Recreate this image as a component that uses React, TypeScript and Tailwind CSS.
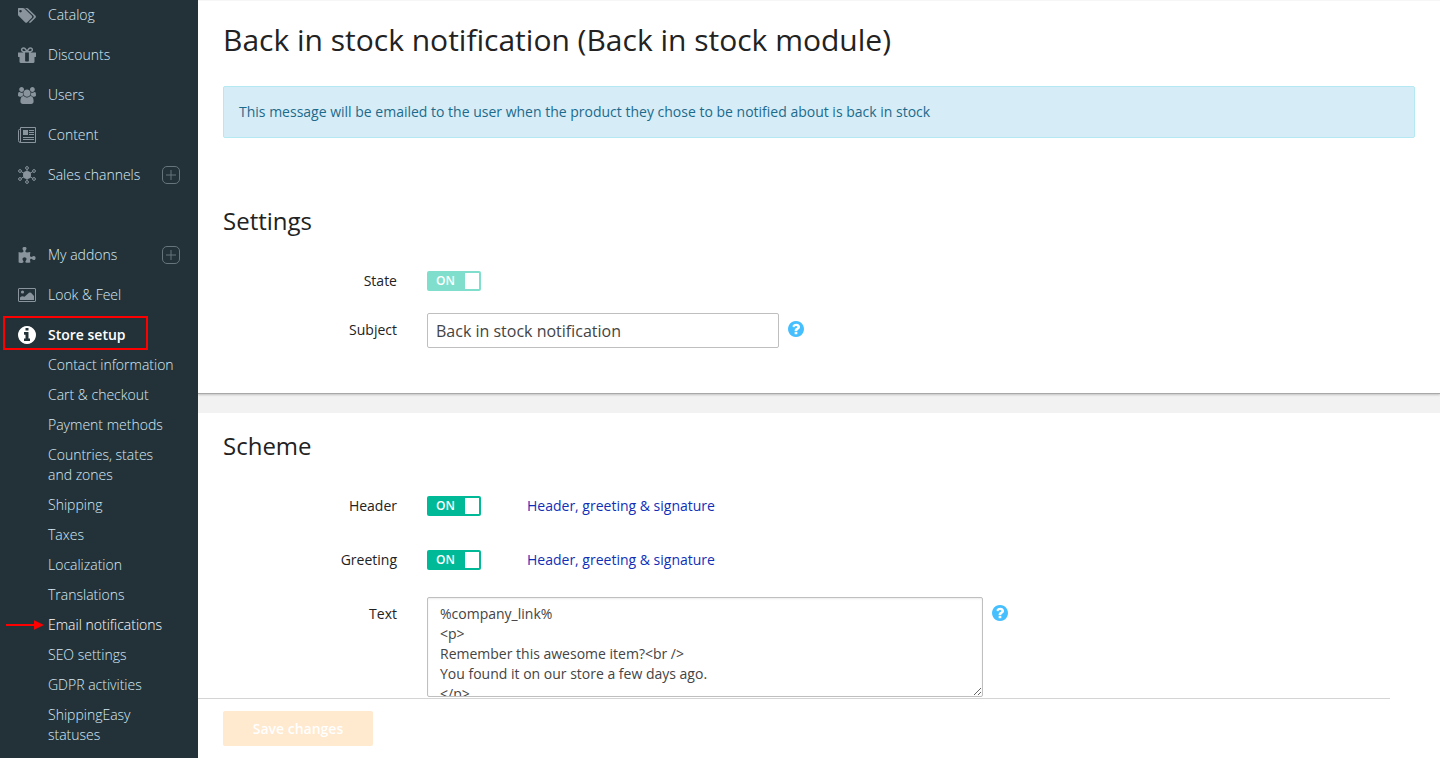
import React, { useState } from "react";

type GlyphProps = { path: string; viewBox: string; className?: string };

function Glyph({ path, viewBox, className = "" }: GlyphProps) {
  return (
    <svg viewBox={viewBox} className={className} fill="currentColor" aria-hidden="true">
      <path d={path} />
    </svg>
  );
}

const TAGS =
  "M384 448q0-53-37.5-90.5t-90.5-37.5-90.5 37.5-37.5 90.5 37.5 90.5 90.5 37.5 90.5-37.5 37.5-90.5zm1067 576q0 53-37 90l-491 492q-39 37-91 37-53 0-90-37l-715-716q-38-37-64.5-101t-26.5-117v-416q0-52 38-90t90-38h416q53 0 117 26.5t102 64.5l715 714q37 39 37 91zm384 0q0 53-37 90l-491 492q-39 37-91 37-36 0-59-14t-53-45l470-470q37-37 37-90 0-52-37-91l-715-714q-38-38-102-64.5t-117-26.5h224q53 0 117 26.5t102 64.5l715 714q37 39 37 91z";
const GIFT =
  "M1056 1356v-716h-320v716q0 25 18 38.5t46 13.5h192q28 0 46-13.5t18-38.5zm-456-844h195l-126-161q-26-31-69-31-40 0-68 28t-28 68 28 68 68 28zm688-96q0-40-28-68t-68-28q-43 0-69 31l-125 161h194q40 0 68-28t28-68zm376 256v320q0 14-9 23t-23 9h-96v416q0 40-28 68t-68 28h-1088q-40 0-68-28t-28-68v-416h-96q-14 0-23-9t-9-23v-320q0-14 9-23t23-9h440q-93 0-158.5-65.5t-65.5-158.5 65.5-158.5 158.5-65.5q107 0 168 77l128 165 128-165q61-77 168-77 93 0 158.5 65.5t65.5 158.5-65.5 158.5-158.5 65.5h440q14 0 23 9t9 23z";
const USERS =
  "M593 896q-162 5-265 128h-134q-82 0-138-40.5t-56-118.5q0-353 124-353 6 0 43.5 21t97.5 42.5 119 21.5q67 0 133-23-5 37-5 66 0 139 81 256zm1071 637q0 120-73 189.5t-194 69.5h-874q-121 0-194-69.5t-73-189.5q0-53 3.5-103.5t14-109 26.5-108.5 43-97.5 62-81 85.5-53.5 111.5-20q10 0 43 21.5t73 48 107 48 135 21.5 135-21.5 107-48 73-48 43-21.5q61 0 111.5 20t85.5 53.5 62 81 43 97.5 26.5 108.5 14 109 3.5 103.5zm-1024-1277q0 106-75 181t-181 75-181-75-75-181 75-181 181-75 181 75 75 181zm704 384q0 159-112.5 271.5t-271.5 112.5-271.5-112.5-112.5-271.5 112.5-271.5 271.5-112.5 271.5 112.5 112.5 271.5zm576 225q0 78-56 118.5t-138 40.5h-134q-103-123-265-128 81-117 81-256 0-29-5-66 66 23 133 23 59 0 119-21.5t97.5-42.5 43.5-21q124 0 124 353zm-128-609q0 106-75 181t-181 75-181-75-75-181 75-181 181-75 181 75 75 181z";
const PUZZLE =
  "M1755 1083q0 81-44.5 135t-123.5 54q-41 0-77.5-17.5t-59-38-56.5-38-71-17.5q-110 0-110 124 0 39 16 115t15 115v5q-22 0-33 1-34 3-97.5 11.5t-115.5 13.5-98 5q-61 0-103-26.5t-42-83.5q0-37 17.5-71t38-56.5 38-59 17.5-77.5q0-79-54-123.5t-135-44.5q-84 0-143 45.5t-59 127.5q0 43 15 83t33.5 64.5 33.5 53 15 50.5q0 45-46 89-37 35-117 35-95 0-245-24-9-2-27.5-4t-27.5-4l-13-2q-1 0-3-1-2 0-2-1v-1024q2 1 17.5 3.5t34 5 21.5 3.5q150 24 245 24 80 0 117-35 46-44 46-89 0-22-15-50.5t-33.5-53-33.5-64.5-15-83q0-82 59-127.5t144-45.5q80 0 134 44.5t54 123.5q0 41-17.5 77.5t-38 59-38 56.5-17.5 71q0 57 42 83.5t103 26.5q64 0 180-15t163-17v2q-1 2-3.5 17.5t-5 34-3.5 21.5q-24 150-24 245 0 80 35 117 44 46 89 46 22 0 50.5-15t53-33.5 64.5-33.5 83-15q82 0 127.5 59t45.5 143z";
const INFO =
  "M1152 1376v-160q0-14-9-23t-23-9h-96v-512q0-14-9-23t-23-9h-320q-14 0-23 9t-9 23v160q0 14 9 23t23 9h96v320h-96q-14 0-23 9t-9 23v160q0 14 9 23t23 9h448q14 0 23-9t9-23zm-128-896v-160q0-14-9-23t-23-9h-192q-14 0-23 9t-9 23v160q0 14 9 23t23 9h192q14 0 23-9t9-23zm640 416q0 209-103 385.5t-279.5 279.5-385.5 103-385.5-103-279.5-279.5-103-385.5 103-385.5 279.5-279.5 385.5-103 385.5 103 279.5 279.5 103 385.5z";
const QUESTION =
  "M1024 1376v-192q0-14-9-23t-23-9h-192q-14 0-23 9t-9 23v192q0 14 9 23t23 9h192q14 0 23-9t9-23zm256-672q0-88-55.5-163t-138.5-116-170-41q-243 0-371 213-15 24 8 42l132 100q7 6 19 6 16 0 25-12 53-68 86-92 34-24 86-24 48 0 85.5 26t37.5 59q0 38-20 61t-68 45q-63 28-115.5 86.5t-52.5 125.5v36q0 14 9 23t23 9h192q14 0 23-9t9-23q0-19 21.5-49.5t54.5-49.5q32-18 49-28.5t46-35 44.5-48 28-60.5 12.5-81zm384 192q0 209-103 385.5t-279.5 279.5-385.5 103-385.5-103-279.5-279.5-103-385.5 103-385.5 279.5-279.5 385.5-103 385.5 103 279.5 279.5 103 385.5z";

function NewsIcon() {
  return (
    <svg viewBox="0 0 18 16" className="h-4 w-[18px]" fill="none" stroke="currentColor" aria-hidden="true">
      <path d="M2.500 0.500h15v15h-15z" />
      <path d="M2.500 2.500h-1q-1 0-1 1v10q0 2 2 2" />
      <path d="M5 3h5v5H5z" fill="currentColor" stroke="none" />
      <path d="M11 3.500h5M11 5.500h5M11 7.500h5M5 10.500h11M5 12.500h11" />
    </svg>
  );
}

function ChannelsIcon() {
  const nodes = [
    [9, 2],
    [9, 16],
    [2, 5],
    [16, 5],
    [2, 13],
    [16, 13],
  ];
  return (
    <svg viewBox="0 0 18 18" className="size-[18px]" fill="none" stroke="currentColor" aria-hidden="true">
      <circle cx="9" cy="9" r="4" fill="currentColor" stroke="none" />
      <path d="M9 3.5v11M3.3 5.7l11.4 6.6M14.7 5.7L3.3 12.3" />
      {nodes.map(([x, y]) => (
        <circle key={`${x}-${y}`} cx={x} cy={y} r="1.4" />
      ))}
    </svg>
  );
}

function PictureIcon() {
  return (
    <svg viewBox="0 0 18 14" className="h-[14px] w-[18px]" aria-hidden="true">
      <rect x="0.5" y="0.5" width="17" height="13" rx="0.5" fill="none" stroke="currentColor" />
      <circle cx="4.5" cy="4" r="1.6" fill="currentColor" />
      <path d="M2 12V9.5Q4 7.5 6.5 8.8L11 4.8Q12 4 13 4.8L16 8V12Z" fill="currentColor" />
    </svg>
  );
}

type Item = { label: string; icon: React.ReactNode; addable?: boolean };

const catalogItems: Item[] = [
  { label: "Catalog", icon: <Glyph path={TAGS} viewBox="0 128 1840 1536" className="h-[15px] w-[18px]" /> },
  { label: "Discounts", icon: <Glyph path={GIFT} viewBox="128 192 1536 1344" className="h-4 w-[18px]" /> },
  { label: "Users", icon: <Glyph path={USERS} viewBox="0 0 1920 1792" className="h-[17px] w-[18px]" /> },
  { label: "Content", icon: <NewsIcon /> },
  { label: "Sales channels", icon: <ChannelsIcon />, addable: true },
];

const storeItems: Item[] = [
  { label: "My addons", icon: <Glyph path={PUZZLE} viewBox="64 0 1700 1664" className="h-[17px] w-[18px]" />, addable: true },
  { label: "Look & Feel", icon: <PictureIcon /> },
];

const setupItems = [
  "Contact information",
  "Cart & checkout",
  "Payment methods",
  "Countries, states and zones",
  "Shipping",
  "Taxes",
  "Localization",
  "Translations",
  "Email notifications",
  "SEO settings",
  "GDPR activities",
  "ShippingEasy statuses",
];

function NavItem({ label, icon, addable }: Item) {
  return (
    <li className="flex h-10 items-center pr-[18px] pl-[18px]">
      <a href="#" className="flex grow items-center gap-3">
        <span className="flex w-[18px] justify-center text-[#89949c]">{icon}</span>
        {label}
      </a>
      {addable && (
        <button type="button" aria-label={`Add to ${label}`} className="text-[#66747c]">
          <svg viewBox="0 0 18 18" className="size-[18px]" fill="none" stroke="currentColor" aria-hidden="true">
            <rect x="0.5" y="0.5" width="17" height="17" rx="4.5" />
            <path d="M9 4v10M4 9h10" />
          </svg>
        </button>
      )}
    </li>
  );
}

function Sidebar() {
  return (
    <nav className="w-[198px] shrink-0 overflow-hidden bg-[#233238] text-sm leading-5 font-light text-[#d6ebf7]">
      <ul className="-mt-[5px]">
        {catalogItems.map((item) => (
          <NavItem key={item.label} {...item} />
        ))}
      </ul>
      <ul className="mt-10">
        {storeItems.map((item) => (
          <NavItem key={item.label} {...item} />
        ))}
        <li>
          <div className="relative flex h-10 items-center pl-[18px] font-semibold text-white">
            <a href="#" className="flex items-center gap-3">
              <Glyph path={INFO} viewBox="128 128 1536 1536" className="size-[18px]" />
              Store setup
            </a>
            <span className="pointer-events-none absolute top-px left-[3px] h-[34px] w-[145px] border-2 border-[#f00]" />
          </div>
          <ul className="-mt-[5px] pr-6 pl-12">
            {setupItems.map((label) =>
              label === "Email notifications" ? (
                <li key={label} className="relative py-[5px] text-white">
                  <svg
                    viewBox="0 0 38 10"
                    className="absolute top-[10px] -left-[42px] h-[10px] w-[38px]"
                    fill="#f00"
                    aria-hidden="true"
                  >
                    <path d="M0 4h28V0.300L38 5l-10 4.700V6H0z" />
                  </svg>
                  <a href="#" aria-current="page">{label}</a>
                </li>
              ) : (
                <li key={label} className="py-[5px]">
                  <a href="#">{label}</a>
                </li>
              ),
            )}
          </ul>
        </li>
      </ul>
    </nav>
  );
}

function Toggle({ id, disabled = false }: { id: string; disabled?: boolean }) {
  const [on, setOn] = useState(true);
  return (
    <label
      htmlFor={id}
      className={
        "flex h-5 w-[54px] items-center justify-between rounded-[2px] pr-[2px] pl-[9px] text-xs leading-4 font-semibold text-white " +
        (disabled ? "bg-[#80dfcc]" : on ? "bg-[#00ba97]" : "bg-[#aaaaaa]")
      }
    >
      <input
        id={id}
        type="checkbox"
        className="sr-only"
        checked={on}
        disabled={disabled}
        onChange={(e) => setOn(e.target.checked)}
      />
      {on ? "ON" : "OFF"}
      <span className="h-4 w-[14px] bg-white" />
    </label>
  );
}

function Help({ label }: { label: string }) {
  return (
    <button type="button" aria-label={label} className="ml-[9px] text-[#46bfff]">
      <Glyph path={QUESTION} viewBox="128 128 1536 1536" className="size-4" />
    </button>
  );
}

function FieldLabel({ htmlFor, children }: { htmlFor: string; children: string }) {
  return (
    <label htmlFor={htmlFor} className="mr-[30px] w-[174px] shrink-0 text-right">
      {children}
    </label>
  );
}

export default function App() {
  const [subject, setSubject] = useState("Back in stock notification");
  return (
    <div className="flex h-screen font-['Open_Sans',sans-serif] text-sm leading-5 text-[#222222]">
      <Sidebar />
      <main className="flex min-w-0 grow flex-col border-t border-[#f6f6f6] bg-white">
        <div className="min-h-0 grow overflow-hidden">
          <section className="relative border-b border-[#a8a8a8] px-[25px] pb-[45px] shadow-[0_1px_2px_rgba(0,0,0,0.2)]">
            <h1 className="pt-[19px] text-[30px] leading-10">Back in stock notification (Back in stock module)</h1>
            <p className="mt-[26px] rounded-[2px] border border-[#b4e9f3] bg-[#d6edf7] px-[15px] py-[15px] text-[#1c6a8c]">
              This message will be emailed to the user when the product they chose to be notified about is back in stock
            </p>
            <h2 className="mt-[67px] text-2xl leading-8">Settings</h2>
            <div className="mt-[34px] flex items-center">
              <FieldLabel htmlFor="state">State</FieldLabel>
              <Toggle id="state" disabled />
            </div>
            <div className="mt-[22px] flex items-start">
              <div className="flex pt-[7px]">
                <FieldLabel htmlFor="subject">Subject</FieldLabel>
              </div>
              <input
                id="subject"
                value={subject}
                onChange={(e) => setSubject(e.target.value)}
                className="h-[35px] w-[352px] rounded-[2px] border border-[#bfbfbf] px-2 text-base text-[#444444]"
              />
              <div className="flex pt-2">
                <Help label="About the subject" />
              </div>
            </div>
          </section>
          <div className="h-[19px] bg-[#f2f2f2]" />
          <section className="px-[25px] pt-[17px]">
            <h2 className="text-2xl leading-8">Scheme</h2>
            <div className="mt-[34px] flex items-center">
              <FieldLabel htmlFor="header">Header</FieldLabel>
              <Toggle id="header" />
              <a href="#" className="ml-[46px] text-[#0f2fb8]">Header, greeting &amp; signature</a>
            </div>
            <div className="mt-[34px] flex items-center">
              <FieldLabel htmlFor="greeting">Greeting</FieldLabel>
              <Toggle id="greeting" />
              <a href="#" className="ml-[46px] text-[#0f2fb8]">Header, greeting &amp; signature</a>
            </div>
            <div className="mt-[27px] flex items-start">
              <div className="flex pt-[7px]">
                <FieldLabel htmlFor="text">Text</FieldLabel>
              </div>
              <textarea
                id="text"
                className="h-[100px] w-[556px] overflow-hidden rounded-[2px] border border-[#bfbfbf] px-3 py-[6px] leading-5 text-[#444444] shadow-[inset_0_1px_2px_rgba(0,0,0,0.08)]"
                defaultValue={
                  "%company_link%\n<p>\nRemember this awesome item?<br />\nYou found it on our store a few days ago.\n</p>"
                }
              />
              <div className="flex pt-2">
                <Help label="About the text" />
              </div>
            </div>
          </section>
        </div>
        <footer className="mr-[50px] shrink-0 border-t border-[#d4d4d4] pt-3 pb-3 pl-[25px]">
          <button type="button" disabled className="h-[35px] w-[150px] rounded-[2px] bg-[#ffe9cf] font-semibold text-white">
            Save changes
          </button>
        </footer>
      </main>
    </div>
  );
}
